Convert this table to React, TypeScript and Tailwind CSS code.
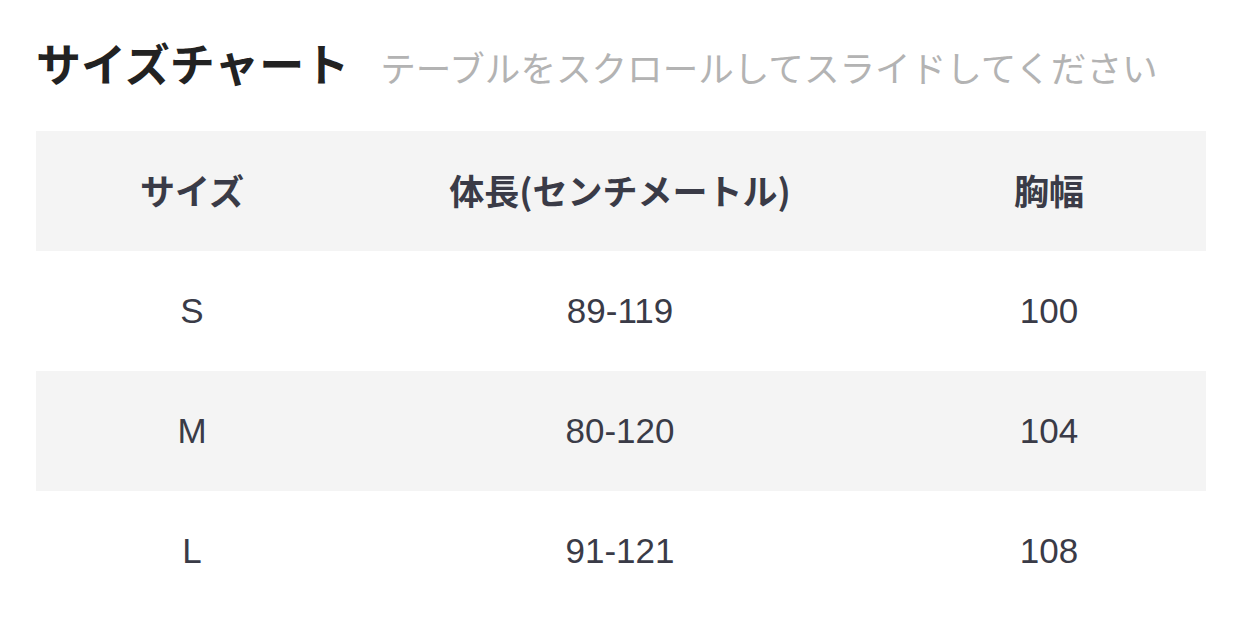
const rows = [
  { size: "S", length: "89-119", chest: "100" },
  { size: "M", length: "80-120", chest: "104" },
  { size: "L", length: "91-121", chest: "108" },
];

const jp = "font-['Noto_Sans_CJK_JP','Noto_Sans',sans-serif]";
const num = "font-['Liberation_Sans','Noto_Sans_CJK_JP',sans-serif]";

export default function App() {
  return (
    <main className="min-h-screen w-full bg-white px-[36px] pt-[36px]">
      <div className={`flex items-baseline gap-[31px] ${jp}`}>
        <h1 className="text-[45px] font-bold leading-[54px] text-[#222222]">サイズチャート</h1>
        <p className="text-[35.6px] leading-[54px] text-[#b3b3b3]">
          テーブルをスクロールしてスライドしてください
        </p>
      </div>

      <div className="mt-[37px] w-[1170px]">
        <div className={`grid h-[120px] grid-cols-[312px_544px_1fr] items-center bg-[#f4f4f4] pb-[2px] text-[35px] font-bold text-[#3a3b47] ${jp}`}>
          <div className="text-center">サイズ</div>
          <div className="text-center">体長(センチメートル)</div>
          <div className="text-center">胸幅</div>
        </div>
        {rows.map((row, i) => (
          <div
            key={row.size}
            className={`grid h-[120px] grid-cols-[312px_544px_1fr] items-center text-[35px] text-[#3a3b47] ${num} ${
              i % 2 === 1 ? "bg-[#f4f4f4]" : "bg-white"
            }`}
          >
            <div className="text-center">{row.size}</div>
            <div className="text-center">{row.length}</div>
            <div className="text-center">{row.chest}</div>
          </div>
        ))}
      </div>
    </main>
  );
}
